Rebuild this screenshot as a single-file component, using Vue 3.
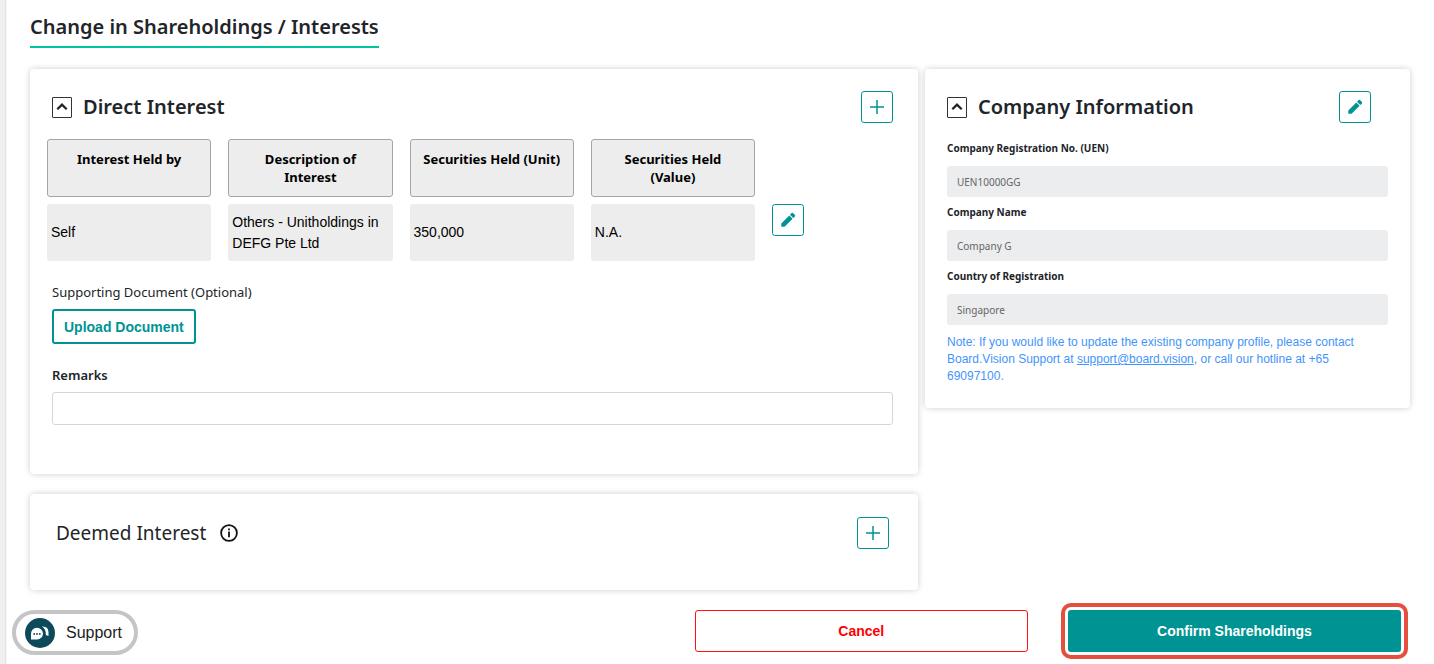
<script setup>
import { ref } from 'vue'

const columns = ['Interest Held by', 'Description of Interest', 'Securities Held (Unit)', 'Securities Held (Value)']
const holdings = [['Self', 'Others - Unitholdings in DEFG Pte Ltd', '350,000', 'N.A.']]
const company = [
  { id: 'uen', label: 'Company Registration No. (UEN)', value: 'UEN10000GG' },
  { id: 'name', label: 'Company Name', value: 'Company G' },
  { id: 'country', label: 'Country of Registration', value: 'Singapore' },
]
const remarks = ref('')
</script>

<template>
  <main class="page">
    <h1 class="title">Change in Shareholdings / Interests</h1>

    <div class="layout">
      <div class="column">
        <section class="card direct">
          <header class="card-head">
            <button class="toggle" type="button" aria-label="Collapse direct interest">
              <svg viewBox="0 0 12 12" width="12" height="12"><path d="M1.300 8.300 6 3.700l4.700 4.600" fill="none" stroke="currentColor" stroke-width="2.300" /></svg>
            </button>
            <h2>Direct Interest</h2>
            <button class="square" type="button" aria-label="Add direct interest">
              <svg viewBox="0 0 16 16" width="16" height="16"><path d="M8 1v14M1 8h14" stroke="currentColor" stroke-width="1.500" /></svg>
            </button>
          </header>

          <table class="holdings">
            <thead>
              <tr>
                <th v-for="c in columns" :key="c" scope="col">{{ c }}</th>
                <td class="action"></td>
              </tr>
            </thead>
            <tbody>
              <tr v-for="row in holdings" :key="row[0]">
                <td v-for="cell in row" :key="cell">{{ cell }}</td>
                <td class="action">
                  <button class="square" type="button" aria-label="Edit holding">
                    <svg viewBox="0 0 16 16" width="16" height="16" fill="currentColor"><path d="M1.300 11.400 9.300 3.400l3.300 3.300-8 8H1.300zM10 2.700l1.600-1.600q.7-.6 1.400 0l1.900 1.900q.6.7 0 1.400l-1.600 1.600z" /></svg>
                  </button>
                </td>
              </tr>
            </tbody>
          </table>

          <div class="below">
            <p id="doc-label" class="doc-label">Supporting Document (Optional)</p>
            <button class="upload" type="button" aria-describedby="doc-label">Upload Document</button>
            <label class="remarks-label" for="remarks">Remarks</label>
            <input id="remarks" v-model="remarks" class="remarks" type="text" />
          </div>
        </section>

        <section class="card deemed">
          <h2>Deemed Interest</h2>
          <svg class="info" viewBox="0 0 20 20" width="20" height="20">
            <circle cx="10" cy="10" r="7.900" fill="none" stroke="currentColor" stroke-width="1.800" />
            <path d="M10 8.600v5.600M10 5.500v1.800" stroke="currentColor" stroke-width="1.800" />
          </svg>
          <button class="square" type="button" aria-label="Add deemed interest">
            <svg viewBox="0 0 16 16" width="16" height="16"><path d="M8 1v14M1 8h14" stroke="currentColor" stroke-width="1.500" /></svg>
          </button>
        </section>
      </div>

      <section class="card company">
        <header class="card-head">
          <button class="toggle" type="button" aria-label="Collapse company information">
            <svg viewBox="0 0 12 12" width="12" height="12"><path d="M1.300 8.300 6 3.700l4.700 4.600" fill="none" stroke="currentColor" stroke-width="2.300" /></svg>
          </button>
          <h2>Company Information</h2>
          <button class="square" type="button" aria-label="Edit company">
            <svg viewBox="0 0 16 16" width="16" height="16" fill="currentColor"><path d="M1.300 11.400 9.300 3.400l3.300 3.300-8 8H1.300zM10 2.700l1.600-1.600q.7-.6 1.400 0l1.900 1.900q.6.7 0 1.400l-1.600 1.600z" /></svg>
          </button>
        </header>
        <div class="fields">
          <div v-for="f in company" :key="f.id" class="field">
            <label :for="f.id">{{ f.label }}</label>
            <input :id="f.id" type="text" :value="f.value" disabled />
          </div>
          <p class="note">
            Note: If you would like to update the existing company profile, please contact Board.Vision Support at
            <a href="mailto:support@board.vision">support@board.vision</a>, or call our hotline at +65 69097100.
          </p>
        </div>
      </section>
    </div>

    <footer class="actions">
      <span></span>
      <button class="cancel" type="button">Cancel</button>
      <button class="confirm" type="button">Confirm Shareholdings</button>
    </footer>

    <button class="support" type="button">
      <svg viewBox="0 0 30 30" width="30" height="30">
        <circle cx="15" cy="15" r="15" fill="#0c4a5b" />
        <path d="M6 21.500v-5.800a6 5.900 0 1 1 6 5.800z" fill="#fff" />
        <path d="M17 8.500q6.500-.5 6.500 6V18l-2.600-.9q.3-5.800-3.900-8.600z" fill="#fff" />
        <g fill="#0c4a5b"><circle cx="9.200" cy="16" r=".9" /><circle cx="12" cy="16" r=".9" /><circle cx="14.800" cy="16" r=".9" /></g>
      </svg>
      <span>Support</span>
    </button>
  </main>
</template>

<style>
body {
  margin: 0;
  background: #fff;
}
</style>

<style scoped>
* {
  box-sizing: border-box;
}
.page {
  min-height: 100vh;
  padding: 12px 24px 4px 25px;
  border-left: 5px solid #f0f0f0;
  box-shadow: inset 3px 0 2px -2px #dcdcdc;
  font-family: "Noto Sans", sans-serif;
  color: #212529;
}
h1,
h2,
p {
  margin: 0;
}
button {
  margin: 0;
  padding: 0;
  background: #fff;
  font-family: "Liberation Sans", Arial, sans-serif;
  cursor: pointer;
}
.title {
  width: fit-content;
  height: 36px;
  border-bottom: 2px solid #00c3a0;
  font-size: 20px;
  line-height: 30px;
  font-weight: 600;
}
.layout {
  display: grid;
  grid-template-columns: 888fr 485fr;
  gap: 7px;
  align-items: start;
  margin-top: 21px;
}
.column {
  display: grid;
  gap: 20px;
}
.card {
  border-radius: 4px;
  background: #fff;
  box-shadow: 0 0 6px rgba(0, 0, 0, 0.2);
}
.card-head {
  display: flex;
  align-items: center;
  padding: 22px 25px 0 22px;
}
.card-head h2 {
  flex: 1;
  margin-left: 11px;
  font-size: 20px;
  line-height: 30px;
  font-weight: 600;
}
.toggle {
  display: grid;
  place-items: center;
  width: 20px;
  height: 21px;
  border: 1px solid #333;
  border-radius: 1px;
  color: #212529;
}
.square {
  display: grid;
  place-items: center;
  width: 32px;
  height: 32px;
  border: 1px solid #009393;
  border-radius: 3px;
  color: #009393;
}
.direct {
  padding-bottom: 49px;
}
.holdings {
  width: 100%;
  margin-top: 9px;
  table-layout: fixed;
  border-collapse: separate;
  border-spacing: 17px 7px;
}
.holdings th,
.holdings td {
  background: #ededed;
  border-radius: 3px;
  color: #000;
}
.holdings th {
  width: 20.9%;
  height: 58px;
  padding: 10px;
  border: 1px solid #a5a5a5;
  font-size: 13px;
  line-height: 18px;
  font-weight: 700;
  text-align: center;
  vertical-align: top;
}
.holdings td {
  height: 57px;
  padding: 0 4px;
  font-family: "Liberation Sans", Arial, sans-serif;
  font-size: 14px;
  line-height: 21px;
}
.holdings td.action {
  padding: 0;
  background: none;
  vertical-align: top;
}
.below {
  padding: 14px 25px 0 22px;
}
.doc-label {
  font-size: 13px;
  line-height: 20px;
}
.upload {
  display: block;
  height: 35px;
  margin-top: 7px;
  padding: 0 10px;
  border: 2px solid #009393;
  border-radius: 3px;
  color: #009393;
  font-size: 14px;
  font-weight: 700;
}
.remarks-label {
  display: block;
  margin-top: 21px;
  font-size: 13px;
  line-height: 20px;
  font-weight: 600;
}
.remarks {
  display: block;
  width: 100%;
  height: 33px;
  margin-top: 7px;
  padding: 0 10px;
  border: 1px solid #d3d7dc;
  border-radius: 3px;
  font: inherit;
  font-size: 13px;
}
.deemed {
  display: flex;
  align-items: center;
  padding: 23px 29px 41px 26px;
}
.deemed h2 {
  font-size: 19px;
  line-height: 30px;
  font-weight: 400;
}
.info {
  margin-left: 13px;
  color: #111;
}
.deemed .square {
  margin-left: auto;
}
.company .card-head {
  padding-right: 39px;
}
.fields {
  padding: 15px 22px 23px;
}
.field label {
  display: block;
  font-size: 10px;
  line-height: 20px;
  font-weight: 700;
}
.field input {
  display: block;
  width: 100%;
  height: 31px;
  margin: 8px 0 5px;
  padding: 0 10px;
  border: 0;
  border-radius: 3px;
  background: #ebedef;
  color: #666;
  font-family: inherit;
  font-size: 10px;
}
.note {
  margin-top: 9px;
  color: #3f95fb;
  font-family: "Liberation Sans", Arial, sans-serif;
  font-size: 12px;
  line-height: 17px;
}
.note a {
  color: inherit;
}
.actions {
  display: grid;
  grid-template-columns: 15fr 8fr 8fr;
  gap: 40px;
  margin-top: 20px;
  padding: 0 9px 8px 0;
}
.cancel,
.confirm {
  height: 42px;
  border-radius: 3px;
  font-size: 14px;
  font-weight: 700;
}
.cancel {
  border: 1px solid #f11;
  color: #f00;
}
.confirm {
  border: 0;
  background: #009393;
  color: #fff;
  outline: 4px solid #e54f3d;
  outline-offset: 3px;
}
.support {
  position: fixed;
  left: 12px;
  bottom: 9px;
  display: flex;
  align-items: center;
  gap: 11px;
  height: 45px;
  padding: 0 12px 0 9px;
  border: 4px solid #c5c5c5;
  border-radius: 23px;
  color: #222;
  font-size: 16px;
}
</style>
